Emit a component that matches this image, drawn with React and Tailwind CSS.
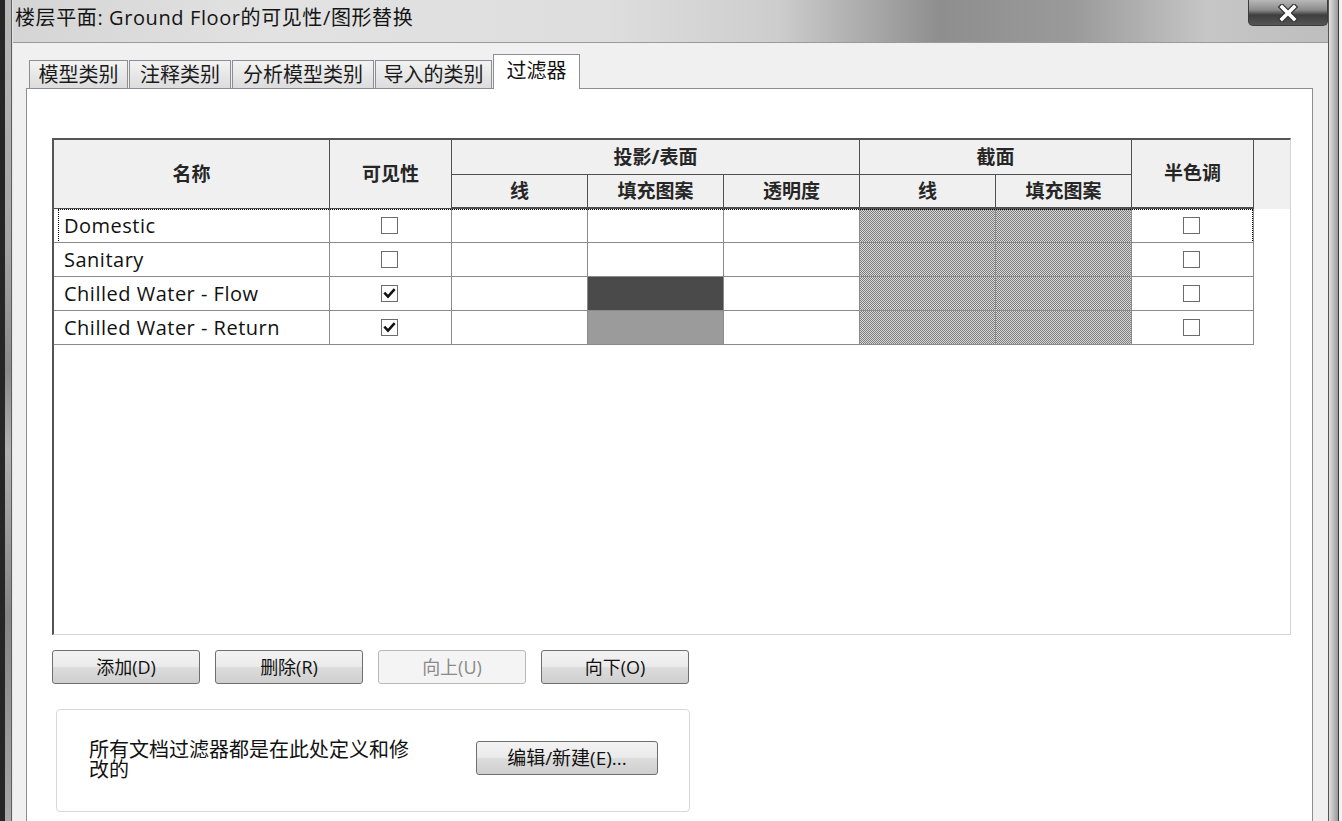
import React from "react";

const COLS = "grid-cols-[276px_122px_136px_136px_136px_136px_136px_122px_36px]";
const HATCH =
  "bg-[repeating-conic-gradient(#7c7c7c_0_25%,#d9d9d9_0_50%)] bg-[length:2px_2px]";

function Check({ checked }) {
  return (
    <span className="w-[17px] h-[17px] border border-[#6b6b6b] bg-white flex items-center justify-center">
      {checked && (
        <svg width="13" height="13" viewBox="0 0 13 13">
          <path d="M2.2 6.6 L5 9.6 L10.8 3" fill="none" stroke="#111" strokeWidth="2.6" strokeLinecap="square" />
        </svg>
      )}
    </span>
  );
}

function HeadCell({ children, className = "" }) {
  return (
    <div
      className={
        "bg-[#f0f0f0] border-r border-b border-[#4f4f4f] flex items-center justify-center text-[19px] font-bold text-[#262626] " +
        className
      }
    >
      {children}
    </div>
  );
}

const rows = [
  { name: "Domestic", vis: false, fill: null },
  { name: "Sanitary", vis: false, fill: null },
  { name: "Chilled Water - Flow", vis: true, fill: "dark" },
  { name: "Chilled Water - Return", vis: true, fill: "mid" },
];

function Row({ r, first }) {
  const cell = "border-r border-b border-[#8a8a8a] h-[34px]";
  return (
    <div className={"grid " + COLS + " relative"}>
      <div className={cell + " flex items-center pl-[10px] text-[20px] tracking-[0.5px] text-[#111]"}>{r.name}</div>
      <div className={cell + " flex items-center justify-center pr-[3px]"}>
        <Check checked={r.vis} />
      </div>
      <div className={cell}></div>
      <div className={cell + " p-0"}>
        {r.fill === "dark" && <div className="w-full h-full bg-[#4a4a4a]"></div>}
        {r.fill === "mid" && <div className="w-full h-full bg-[#9b9b9b]"></div>}
      </div>
      <div className={cell}></div>
      <div className={cell + " " + HATCH}></div>
      <div className={cell + " " + HATCH}></div>
      <div className={cell + " flex items-center justify-center pr-[3px]"}>
        <Check checked={false} />
      </div>
      <div className="h-[34px]"></div>
      {first && (
        <div className="absolute left-[4px] top-0 w-[1195px] h-[32px] border-t border-l border-r border-dotted border-black pointer-events-none"></div>
      )}
    </div>
  );
}

function Btn({ children, disabled }) {
  return (
    <button
      className={
        "w-[148px] h-[34px] rounded-[3px] border text-[18px] flex items-center justify-center " +
        (disabled
          ? "border-[#b5b9bc] bg-[#f4f4f4] text-[#8a8a8a]"
          : "border-[#6f6f6f] bg-[linear-gradient(#f3f3f3_0%,#ebebeb_48%,#dcdcdc_52%,#cfcfcf_100%)] text-[#111]")
      }
    >
      {children}
    </button>
  );
}

const TAB =
  "h-[28px] border border-b-0 border-[#8c8e94] bg-[linear-gradient(#f3f3f3,#dcdcdc)] flex items-center justify-center";

export default function App() {
  return (
    <div className="relative w-[1342px] h-[821px] overflow-hidden flex font-['Open_Sans','Noto_Sans_CJK_SC',sans-serif] bg-[linear-gradient(90deg,#d4d4d4_0%,#e2e2e2_20%,#dedede_45%,#cdcdcd_58%,#8e8e8e_70%,#9a9a9a_80%,#c6c6c6_90%,#bdbdbd_100%)]">
      {/* left frame */}
      <div className="w-[13px] h-full flex shrink-0">
        <div className="w-[5px] h-full bg-[#262626]"></div>
        <div className="w-[6px] h-full bg-[linear-gradient(#b9b9b9_0%,#a5a5a5_30%,#8a8a8a_45%,#b0b0b0_55%,#858585_75%,#a8a8a8_100%)]"></div>
        <div className="w-[1px] h-full bg-[#5e5e5e]"></div>
        <div className="w-[1px] h-full bg-[#e6e6e6]"></div>
      </div>

      {/* middle */}
      <div className="flex-1 flex flex-col min-w-0">
        <div className="h-[42px] shrink-0 flex items-center pl-[2px] pb-[6px] text-[20px] tracking-[0.6px] text-[#141414]">
          楼层平面: Ground Floor的可见性/图形替换
        </div>
        <div className="flex-1 flex flex-col bg-[#f0f0f0] border-t border-[#9a9a9a] pl-[13px] pr-[15px] min-h-0">
          {/* tabs */}
          <div className="h-[45px] shrink-0 flex items-end pl-[3px] gap-[1px] text-[20px] text-[#1a1a1a]">
            <div className={TAB + " w-[99px]"}>模型类别</div>
            <div className={TAB + " w-[102px]"}>注释类别</div>
            <div className={TAB + " w-[142px]"}>分析模型类别</div>
            <div className={TAB + " w-[117px]"}>导入的类别</div>
            <div className="relative z-10 -mb-px h-[35px] w-[87px] border border-b-0 border-[#8c8e94] bg-white flex items-center justify-center pb-[3px] text-[#111]">过滤器</div>
          </div>

          {/* panel */}
          <div className="flex-1 bg-white border-t border-l border-r border-[#8c8e94] pl-[25px] pt-[49px]">
            {/* table */}
            <div className="w-[1239px] h-[497px] border-t-2 border-l-2 border-t-[#555] border-l-[#555] border-r border-b border-r-[#d4d4d4] border-b-[#d4d4d4] bg-white">
              <div className={"grid " + COLS + " grid-rows-[35px_34px]"}>
                <HeadCell className="row-span-2">名称</HeadCell>
                <HeadCell className="row-span-2">可见性</HeadCell>
                <HeadCell className="col-span-3">投影/表面</HeadCell>
                <HeadCell className="col-span-2">截面</HeadCell>
                <HeadCell className="row-span-2 border-b-2">半色调</HeadCell>
                <div className="row-span-2 bg-[#f0f0f0]"></div>
                <HeadCell className="border-b-2">线</HeadCell>
                <HeadCell className="border-b-2">填充图案</HeadCell>
                <HeadCell className="border-b-2">透明度</HeadCell>
                <HeadCell className="border-b-2">线</HeadCell>
                <HeadCell className="border-b-2">填充图案</HeadCell>
              </div>
              <div>
                {rows.map((r, i) => (
                  <Row key={r.name} r={r} first={i === 0} />
                ))}
              </div>
            </div>

            {/* buttons */}
            <div className="mt-[15px] flex gap-[15px]">
              <Btn>添加(D)</Btn>
              <Btn>删除(R)</Btn>
              <Btn disabled>向上(U)</Btn>
              <Btn>向下(O)</Btn>
            </div>

            {/* group box */}
            <div className="mt-[25px] ml-[4px] w-[634px] h-[103px] rounded-[4px] border border-[#d6d9dc] flex items-center pl-[32px] pb-[5px]">
              <div className="w-[330px] text-[20px] leading-[20px] text-[#111] pt-[4px]">
                所有文档过滤器都是在此处定义和修改的
              </div>
              <button className="ml-[57px] w-[182px] h-[34px] rounded-[3px] border border-[#6f6f6f] bg-[linear-gradient(#f3f3f3_0%,#ebebeb_48%,#dcdcdc_52%,#cfcfcf_100%)] text-[19px] text-[#111] flex items-center justify-center">
                编辑/新建(E)...
              </button>
            </div>
          </div>
        </div>
      </div>

      {/* right frame */}
      <div className="w-[14px] h-full flex shrink-0">
        <div className="w-[1px] h-full bg-[#555]"></div>
        <div className="w-[9px] h-full bg-[linear-gradient(90deg,#e0e0e0,#b5b5b5_60%,#9a9a9a)]"></div>
        <div className="w-[1px] h-full bg-[#3a3a3a]"></div>
        <div className="w-[3px] h-full bg-[#f2f2f2]"></div>
      </div>

      {/* close button */}
      <div className="absolute left-[1248px] top-0 w-[80px] h-[26px] rounded-b-[5px] border border-t-0 border-[#3c3c3c] bg-[linear-gradient(#b8b8b8_0%,#8a8a8a_40%,#3e3e3e_60%,#555_100%)] flex items-center justify-center">
        <svg width="22" height="18" viewBox="0 0 22 18">
          <path d="M5 3 L17 15 M17 3 L5 15" stroke="#333" strokeWidth="6" strokeLinecap="square" />
          <path d="M5 3 L17 15 M17 3 L5 15" stroke="#fff" strokeWidth="3.6" strokeLinecap="square" />
        </svg>
      </div>
    </div>
  );
}
